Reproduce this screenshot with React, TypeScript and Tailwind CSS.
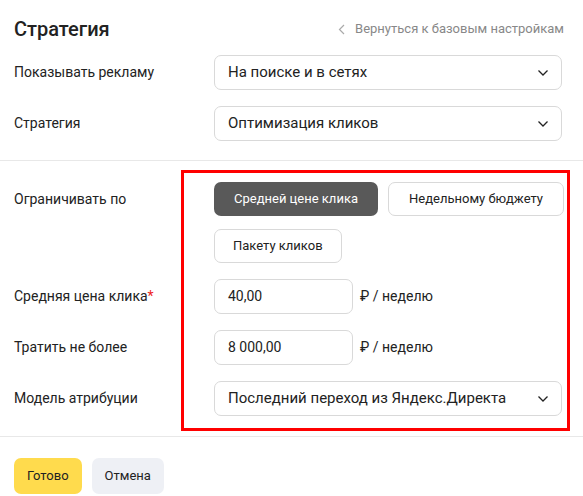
import React from 'react';

const Chevron = () => (
  <svg width="12" height="8" viewBox="0 0 12 8" fill="none" className="shrink-0">
    <path d="M1.5 1.5L6 6L10.5 1.5" stroke="#222" strokeWidth="1.3" />
  </svg>
);

function Select({ value }: { value: string }) {
  return (
    <div className="flex h-[35px] w-[348px] items-center justify-between rounded-[7px] border border-[#d9d9d9] pl-[13px] pr-[12px] text-[15px] text-[#222]">
      <span>{value}</span>
      <Chevron />
    </div>
  );
}

function Row({ label, children, className = '' }: { label: React.ReactNode; children: React.ReactNode; className?: string }) {
  return (
    <div className={`flex items-center ${className}`}>
      <div className="w-[200px] shrink-0 text-[14px] text-[#222]">{label}</div>
      {children}
    </div>
  );
}

function Amount({ value }: { value: string }) {
  return (
    <div className="flex items-center">
      <div className="flex h-[35px] w-[139px] items-center rounded-[7px] border border-[#d9d9d9] pl-[13px] text-[14px] text-[#222]">
        {value}
      </div>
      <span className="ml-[7px] text-[14px] text-[#222]">₽ / неделю</span>
    </div>
  );
}

export default function App() {
  return (
    <div className="relative h-[496px] w-[583px] overflow-hidden bg-white font-['Roboto',sans-serif]">
      <div className="flex h-[45px] items-center justify-between pl-[14px] pr-[19px] pt-[13px]">
        <h1 className="text-[20px] font-medium text-[#222]">Стратегия</h1>
        <div className="flex items-center gap-[10px] text-[13px] text-[#888]">
          <svg width="7" height="11" viewBox="0 0 7 11" fill="none">
            <path d="M6 1L1.5 5.5L6 10" stroke="#aaa" strokeWidth="1.2" />
          </svg>
          <span>Вернуться к базовым настройкам</span>
        </div>
      </div>

      <div className="flex flex-col gap-[16px] px-[14px] pt-[10px]">
        <Row label="Показывать рекламу">
          <Select value="На поиске и в сетях" />
        </Row>
        <Row label="Стратегия">
          <Select value="Оптимизация кликов" />
        </Row>
      </div>

      <div className="mt-[19px] h-px bg-[#e8e8e8]" />

      <div className="flex flex-col px-[14px] pt-[21px]">
        <div className="flex items-start">
          <div className="w-[200px] shrink-0 pt-[7px] text-[14px] text-[#222]">Ограничивать по</div>
          <div className="flex w-[350px] flex-wrap gap-x-[10px] gap-y-[13px]">
            <div className="flex h-[34px] items-center rounded-[7px] bg-[#595959] px-[20px] text-[13px] text-white">
              Средней цене клика
            </div>
            <div className="flex h-[34px] items-center rounded-[7px] border border-[#d9d9d9] px-[20px] text-[13px] text-[#222]">
              Недельному бюджету
            </div>
            <div className="flex h-[34px] items-center rounded-[7px] border border-[#d9d9d9] px-[18px] text-[13px] text-[#222]">
              Пакету кликов
            </div>
          </div>
        </div>

        <Row className="mt-[16px]" label={<>Средняя цена клика<span className="text-[#e22]">*</span></>}>
          <Amount value="40,00" />
        </Row>
        <Row className="mt-[16px]" label="Тратить не более">
          <Amount value="8 000,00" />
        </Row>
        <Row className="mt-[16px]" label="Модель атрибуции">
          <Select value="Последний переход из Яндекс.Директа" />
        </Row>
      </div>

      <div className="mt-[20px] h-px bg-[#e8e8e8]" />

      <div className="flex gap-[10px] px-[14px] pt-[21px]">
        <div className="flex h-[36px] items-center rounded-[7px] bg-[#ffdb4d] px-[13px] text-[13px] text-[#222]">Готово</div>
        <div className="flex h-[36px] items-center rounded-[7px] bg-[#eef0f5] px-[13px] text-[13px] text-[#222]">Отмена</div>
      </div>

      <div className="pointer-events-none absolute left-[181px] top-[170px] h-[261px] w-[389px] border-[3px] border-[#ff0000]" />
    </div>
  );
}
